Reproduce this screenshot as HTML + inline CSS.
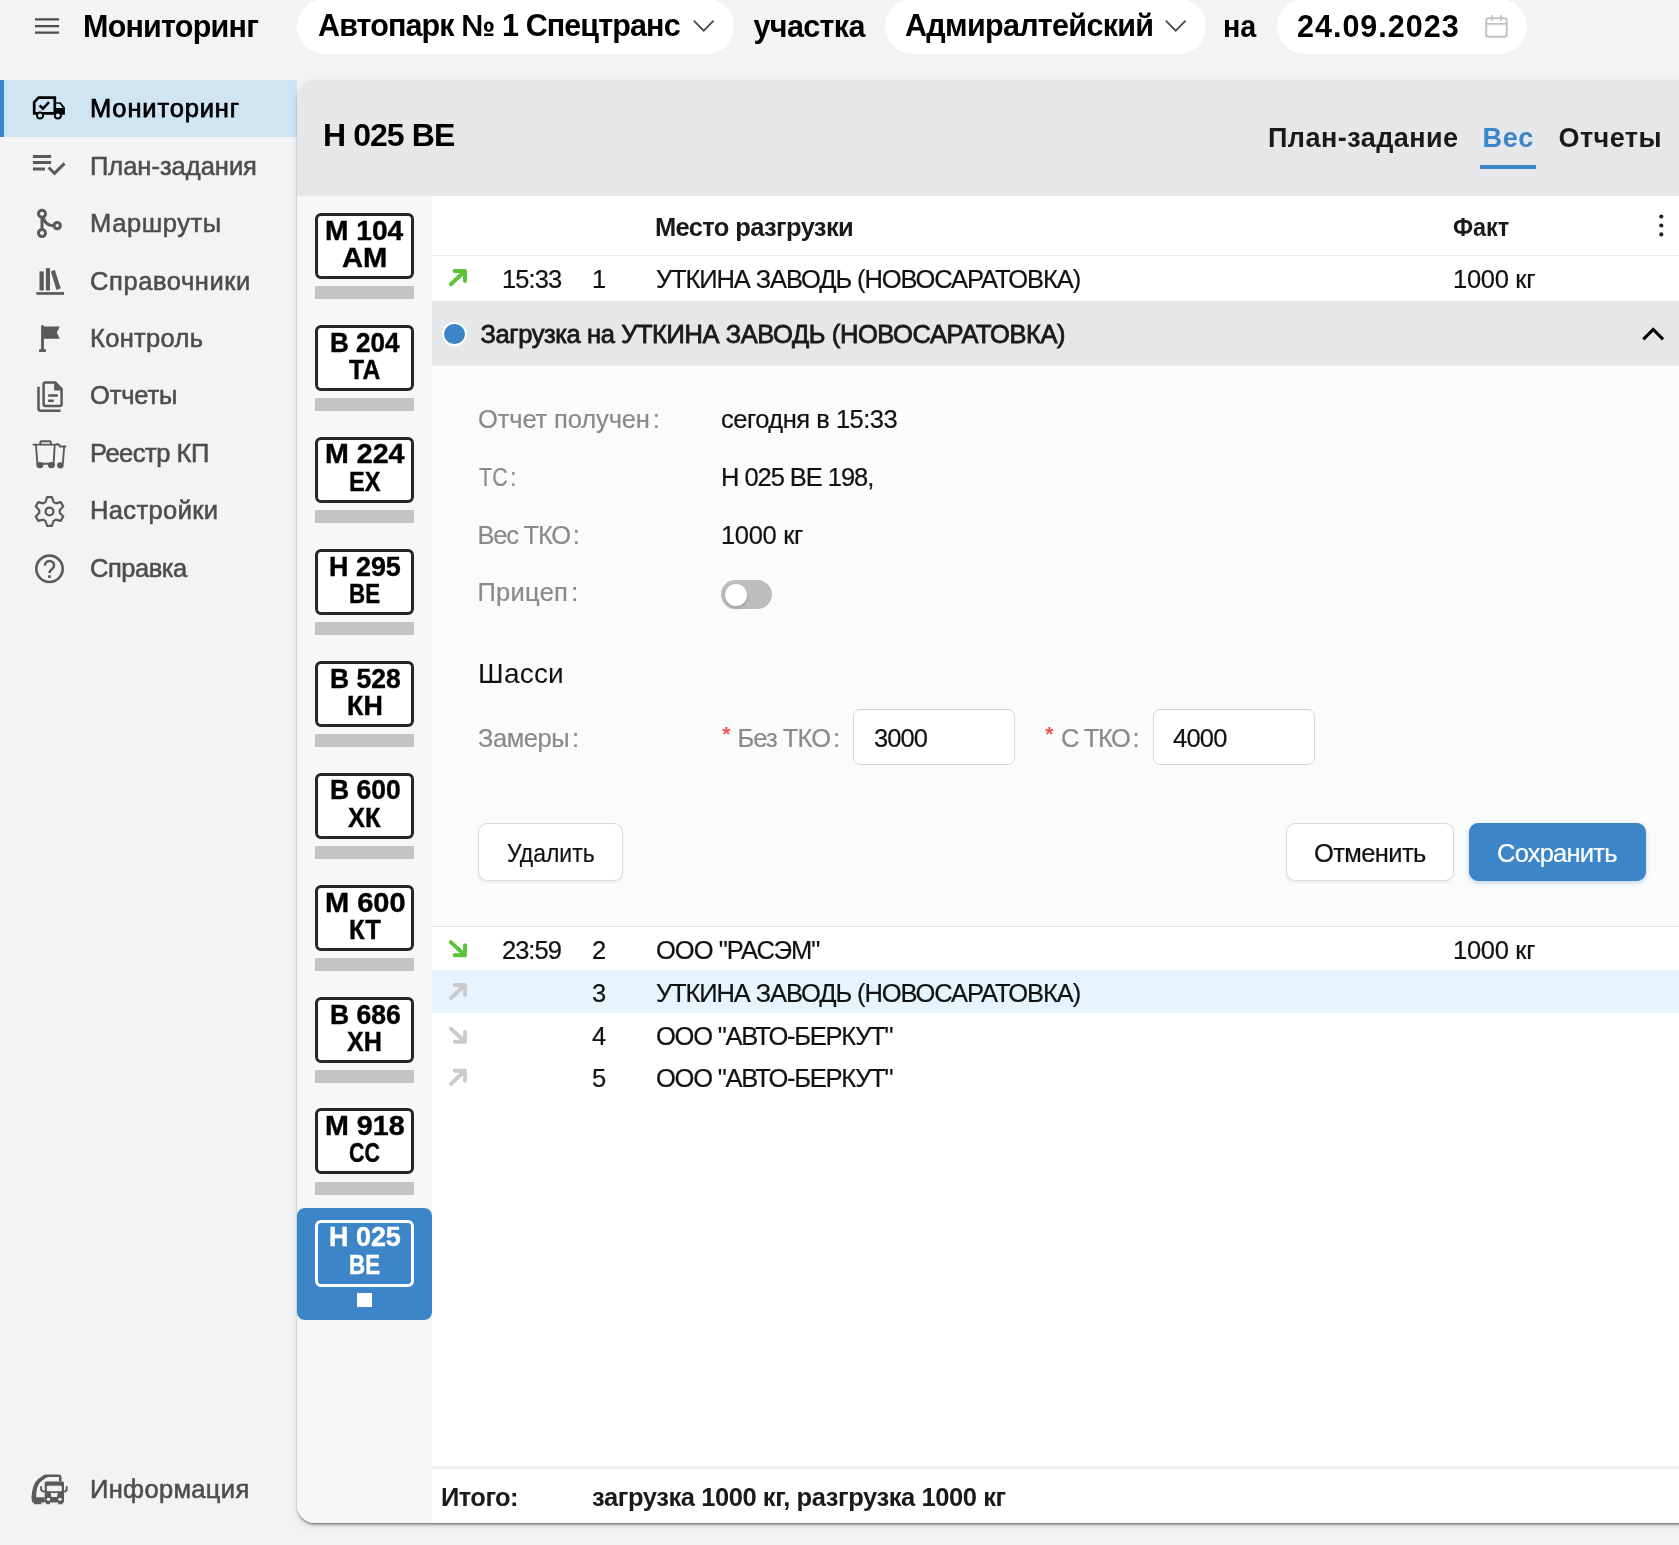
<!DOCTYPE html>
<html lang="ru">
<head>
<meta charset="utf-8">
<title>Мониторинг</title>
<style>
*{box-sizing:border-box;margin:0;padding:0}
html,body{width:1679px;height:1545px;overflow:hidden}
body{background:#f2f3f4;font-family:"Liberation Sans",sans-serif;color:#000;position:relative}
.a{position:absolute;white-space:nowrap;line-height:1}
svg{display:block;position:absolute;overflow:visible}
/* top bar */
.hd{font-weight:700;font-size:30.5px;color:#000}
.pill{position:absolute;top:-1.2px;height:55.2px;border-radius:27.6px;background:#fff}
/* sidebar */
.nav{font-size:25.5px;color:#4d4d4d;left:90px;-webkit-text-stroke:.55px #4d4d4d}
.nav.act{color:#000;-webkit-text-stroke:.75px #000}
.navsel{position:absolute;left:0;top:80px;width:297px;height:57px;background:#cfe5f3;border-left:4px solid #3d85c9}
/* panel */
.panel{position:absolute;left:297px;top:80px;width:1400px;height:1443px;background:#fff;border-radius:18px 0 0 18px;box-shadow:0 2.5px 3px -1.5px rgba(0,0,0,.62),0 3px 9px rgba(0,0,0,.10);overflow:hidden}
.phead{position:absolute;left:0;top:0;width:100%;height:116px;background:#e6e7e9}
.vcol{position:absolute;left:0;top:116px;width:135px;height:1330px;background:#f6f7f7}
.plate{position:absolute;left:315px;width:98.7px;height:66px;border:3px solid #262626;border-radius:6px;background:#fff}
.pt{font-weight:700;font-size:27px;color:#000;-webkit-text-stroke:.4px currentColor}
.pbar{position:absolute;left:315px;width:98.7px;height:13.4px;background:#c4c4c4}
.tab{font-size:27px;font-weight:700;color:#1a1a1a}
.th{font-size:25.5px;font-weight:700;color:#1a1a1a}
.td{font-size:25.5px;color:#111;-webkit-text-stroke:.2px currentColor}
.lbl{font-size:25.5px;color:#8a8a8a;-webkit-text-stroke:.2px #8a8a8a}
.col{margin-left:3px}
.inp{position:absolute;height:55.5px;width:162px;border:1px solid #d5d5d5;border-radius:7px;background:#fff}
.btn{position:absolute;top:823px;height:58px;border:1px solid #d9d9d9;border-radius:9px;background:#fff;box-shadow:0 2px 3px rgba(0,0,0,.06)}
</style>
</head>
<body>
<div id="root" style="position:absolute;left:0;top:0;width:1679px;height:1545px;will-change:transform">
<!-- TOP BAR -->
<svg style="left:35px;top:18px" width="24" height="17" viewBox="0 0 24 17"><path d="M0 1.4h24.1M0 8.1h24.1M0 14.6h24.1" stroke="#4d4d4d" stroke-width="2.3" fill="none"/></svg>
<div class="a hd" id="t_title" style="left:83px;top:11px;letter-spacing:-0.78px">Мониторинг</div>
<div class="pill" style="left:297px;width:437px"></div>
<div class="a hd" id="t_p1" style="left:318px;top:10px;letter-spacing:-0.89px">Автопарк № 1 Спецтранс</div>
<svg style="left:692.6px;top:20.2px" width="22" height="12" viewBox="0 0 22 12"><path d="M.8.7l9.9 10L20.6.7" stroke="#4a4a4a" stroke-width="1.7" fill="none"/></svg>
<div class="a hd" id="t_uch" style="left:753.5px;top:11px;letter-spacing:-0.64px">участка</div>
<div class="pill" style="left:885px;width:321px"></div>
<div class="a hd" id="t_p2" style="left:905px;top:10px;letter-spacing:-0.69px">Адмиралтейский</div>
<svg style="left:1165.2px;top:20.2px" width="22" height="12" viewBox="0 0 22 12"><path d="M.8.7l9.9 10L20.6.7" stroke="#4a4a4a" stroke-width="1.7" fill="none"/></svg>
<div class="a hd" id="t_na" style="left:1223.4px;top:11px;transform-origin:0 0;transform:scaleX(.94)">на</div>
<div class="pill" style="left:1277px;width:250px"></div>
<div class="a hd" id="t_p3" style="left:1297px;top:11px;letter-spacing:1px">24.09.2023</div>
<svg style="left:1480px;top:10px" width="34" height="34" viewBox="1480 10 34 34"><rect x="1486.2" y="18.2" width="20.5" height="18.5" rx="2.2" fill="none" stroke="#c2c2c2" stroke-width="2"/><path d="M1486 23.9h21M1492 15.2v5.5M1500.9 15.2v5.5" stroke="#c2c2c2" stroke-width="1.9" fill="none"/></svg>

<!-- SIDEBAR -->
<div class="navsel"></div>
<div class="a nav act" id="n1" style="top:96px;letter-spacing:0.84px">Мониторинг</div>
<div class="a nav" id="n2" style="top:153.5px;letter-spacing:-0.01px">План-задания</div>
<div class="a nav" id="n3" style="top:211px;letter-spacing:0.6px">Маршруты</div>
<div class="a nav" id="n4" style="top:268.5px;letter-spacing:0.58px">Справочники</div>
<div class="a nav" id="n5" style="top:326px;letter-spacing:0.31px">Контроль</div>
<div class="a nav" id="n6" style="top:383.4px;letter-spacing:-0.16px">Отчеты</div>
<div class="a nav" id="n7" style="top:440.9px;letter-spacing:-0.49px">Реестр КП</div>
<div class="a nav" id="n8" style="top:498.4px;letter-spacing:0.38px">Настройки</div>
<div class="a nav" id="n9" style="top:555.9px;letter-spacing:-0.48px">Справка</div>
<div class="a nav" id="n10" style="top:1477px;letter-spacing:0.34px">Информация</div>

<!-- ICONS -->
<svg style="left:0;top:0" width="297" height="1545" viewBox="0 0 297 1545">
<!-- monitoring truck -->
<g fill="none" stroke="#000">
<path d="M34.2 102.1L38.6 97.6H54.8V113.4H34.2Z" stroke-width="2.7" stroke-linejoin="miter"/>
<path d="M39.6 105.3L42.9 108.6L49 102.2" stroke-width="2.5"/>
</g>
<path d="M56.1 102.2H60.6L64.9 107.4V114.7H56.1ZM56.1 103.8V108H62.9L59.7 103.8Z" fill="#000" fill-rule="evenodd"/>
<circle cx="40" cy="115.5" r="3.05" fill="#cfe5f3" stroke="#000" stroke-width="1.9"/>
<circle cx="57.9" cy="115.5" r="3.05" fill="#cfe5f3" stroke="#000" stroke-width="1.9"/>
<!-- plan tasks -->
<path d="M32.9 156.4H51.1M32.9 162.6H51.1M32.9 169.1H45" stroke="#595a5c" stroke-width="3" fill="none"/>
<path d="M48.6 168.6L54.5 174.5L64.5 164.5" stroke="#595a5c" stroke-width="3" fill="none" transform="translate(0,-1.1)"/>
<!-- routes -->
<g fill="none" stroke="#595a5c" stroke-width="3">
<circle cx="42" cy="213.8" r="3.5"/><circle cx="42" cy="233.1" r="3.5"/><circle cx="57.2" cy="225.6" r="3.2"/>
<path d="M42 217.5V229.5M43.3 217.5Q45 225.3 53.6 225.8"/>
</g>
<!-- books -->
<g fill="#595a5c">
<rect x="39.5" y="271.4" width="4.3" height="19.1"/><rect x="45.9" y="268.2" width="4.1" height="22.3"/>
<path d="M50.9 271.4L54.8 269.8L60.7 288.2L56.5 290Z"/><rect x="36.3" y="292.1" width="27.7" height="2.7"/>
</g>
<!-- flag -->
<g fill="#595a5c">
<path d="M41.1 326.5a1.4 1.4 0 0 1 2.8 0H59.8L56.8 332.6L59.8 338.7H43.9V349.2H45.9V351.9H39.1V349.2H41.1Z"/>
</g>
<!-- reports -->
<g fill="none" stroke="#595a5c" stroke-width="2.5">
<path d="M45.5 382.4H55.2L61.6 389V404Q61.6 406 59.6 406H45.5Q43.6 406 43.6 404V384.3Q43.6 382.4 45.5 382.4Z"/>
<path d="M38.5 386.8V408.5Q38.5 410.7 40.7 410.7H60.6" />
<path d="M48.1 395.5H57.9M48.1 400.7H53.8" stroke-width="2.4"/>
</g>
<path d="M54.1 381.5V390.6H62.5Z" fill="#595a5c"/>
<!-- bins -->
<g fill="none" stroke="#595a5c" stroke-width="1.9" stroke-linecap="round" stroke-linejoin="round">
<path d="M33.4 444.6H57"/><path d="M40.3 444.6V442.2Q40.3 441.3 41.2 441.3H49.9Q50.8 441.3 50.8 442.2V444.6"/>
<path d="M36 445.5L37.4 464M54.7 445.5L53.6 464M41 463.8H50"/>
<path d="M57 444.2Q59.6 444.2 59.8 446.5H65.6M64.1 447L62.9 463"/>
</g>
<ellipse cx="39.9" cy="465.1" rx="3.5" ry="3.2" fill="#595a5c"/><ellipse cx="51.4" cy="465.1" rx="3.5" ry="3.2" fill="#595a5c"/><ellipse cx="60.4" cy="465.3" rx="3.3" ry="3.1" fill="#595a5c"/>
<!-- gear -->
<path d="M45.5 502.0L47.1 497.1L51.9 497.1L53.5 502.0A10.3 10.3 0 0 1 55.7 503.3L60.8 502.2L63.2 506.4L59.7 510.2A10.3 10.3 0 0 1 59.7 512.8L63.2 516.6L60.8 520.8L55.7 519.7A10.3 10.3 0 0 1 53.5 521.0L51.9 525.9L47.1 525.9L45.5 521.0A10.3 10.3 0 0 1 43.3 519.7L38.2 520.8L35.8 516.6L39.3 512.8A10.3 10.3 0 0 1 39.3 510.2L35.8 506.4L38.2 502.2L43.3 503.3A10.3 10.3 0 0 1 45.5 502.0Z" fill="none" stroke="#595a5c" stroke-width="2.2" stroke-linejoin="round"/>
<circle cx="49.5" cy="511.5" r="3.9" fill="none" stroke="#595a5c" stroke-width="2.3"/>
<!-- help -->
<circle cx="49.5" cy="568.8" r="13.2" fill="none" stroke="#595a5c" stroke-width="2.6"/>
<path d="M44.9 565.6A4.6 4.6 0 0 1 54.1 565.4C54.1 569 49.5 569.3 49.5 573" fill="none" stroke="#595a5c" stroke-width="2.5"/>
<rect x="48.1" y="575.3" width="2.8" height="2.6" fill="#595a5c"/>
<!-- info truck -->
<path d="M46.2 1481.5H62.5Q64 1481.5 64 1483V1502.6H62.5V1504.2H58.2V1502.6H50V1504.2H46.1V1502.6H44.7V1483Q44.7 1481.5 46.2 1481.5ZM48 1485.8Q46.8 1485.8 46.8 1487V1490Q46.8 1491.2 48 1491.2H60.6Q61.8 1491.2 61.8 1490V1487Q61.8 1485.8 60.6 1485.8ZM50.7 1493L51.6 1496.9H57L57.9 1493ZM46.6 1499.2a1.9 1.5 0 1 0 3.8 0a1.9 1.5 0 1 0 -3.8 0ZM58.1 1499.2a1.9 1.5 0 1 0 3.8 0a1.9 1.5 0 1 0 -3.8 0Z" fill="#595a5c" fill-rule="evenodd"/>
<path d="M41.1 1487V1489.5Q41.1 1491.3 44.7 1491.6M66.7 1487V1489.5Q66.7 1491.3 64 1491.6" fill="none" stroke="#595a5c" stroke-width="1.9" stroke-linecap="round"/>
<path d="M61.5 1481.5V1477.4Q61.5 1474.4 58.6 1474.4H46Q44.8 1474.4 43.8 1475L37.5 1479.6Q32.4 1484 31.4 1497.5L32.3 1502.6H33.9V1504.2H41.4V1502.6H44.7V1497.2H36.1Q36.3 1489 38.2 1485.4Q39.5 1482.6 42 1480.6L46.5 1477.6Q47.3 1476.9 48.5 1476.9H59V1481.5Z" fill="#595a5c"/>
</svg>
<!-- /ICONS -->

<!-- PANEL -->
<div class="panel">
  <div class="phead"></div>
  <div class="vcol"></div>
</div>
<div class="a" id="t_ptitle" style="left:323px;top:119px;font-size:32px;font-weight:700;letter-spacing:-0.93px">Н 025 ВЕ</div>
<div class="a tab" id="tab1" style="left:1268px;top:125px;letter-spacing:0.46px">План-задание</div>
<div class="a tab" id="tab2" style="left:1482.5px;top:125px;color:#3d85c9;letter-spacing:0.85px">Вес</div>
<div class="a" style="left:1480px;top:165px;width:56px;height:4px;background:#3d85c9"></div>
<div class="a tab" id="tab3" style="left:1558.5px;top:125px;letter-spacing:0.42px">Отчеты</div>

<!-- VEHICLES -->
<div class="plate" style="top:213px"></div><div class="pbar" style="top:286px"></div>
<div class="a pt" id="pl0a" style="left:324.50px;top:218.1px;transform-origin:0 0;transform:scaleX(1.0433)">М 104</div><div class="a pt" id="pl0b" style="left:342.00px;top:245.3px;transform-origin:0 0;transform:scaleX(1.0783)">АМ</div>
<div class="plate" style="top:325px"></div><div class="pbar" style="top:398px"></div>
<div class="a pt" id="pl1a" style="left:329.50px;top:330.2px;transform-origin:0 0;transform:scaleX(0.9662)">В 204</div><div class="a pt" id="pl1b" style="left:348.50px;top:357.4px;transform-origin:0 0;transform:scaleX(0.9147)">ТА</div>
<div class="plate" style="top:437px"></div><div class="pbar" style="top:510px"></div>
<div class="a pt" id="pl2a" style="left:325.00px;top:441.0px;transform-origin:0 0;transform:scaleX(1.0595)">М 224</div><div class="a pt" id="pl2b" style="left:349.00px;top:469.2px;transform-origin:0 0;transform:scaleX(0.8746)">ЕХ</div>
<div class="plate" style="top:549px"></div><div class="pbar" style="top:622px"></div>
<div class="a pt" id="pl3a" style="left:329.00px;top:554.1px;transform-origin:0 0;transform:scaleX(0.9972)">Н 295</div><div class="a pt" id="pl3b" style="left:349.00px;top:581.3px;transform-origin:0 0;transform:scaleX(0.8281)">ВЕ</div>
<div class="plate" style="top:661px"></div><div class="pbar" style="top:734px"></div>
<div class="a pt" id="pl4a" style="left:329.50px;top:666.1px;transform-origin:0 0;transform:scaleX(0.9802)">В 528</div><div class="a pt" id="pl4b" style="left:347.00px;top:693.3px;transform-origin:0 0;transform:scaleX(0.9944)">КН</div>
<div class="plate" style="top:773px"></div><div class="pbar" style="top:846px"></div>
<div class="a pt" id="pl5a" style="left:329.50px;top:776.9px;transform-origin:0 0;transform:scaleX(0.9800)">В 600</div><div class="a pt" id="pl5b" style="left:348.00px;top:805.1px;transform-origin:0 0;transform:scaleX(0.9429)">ХК</div>
<div class="plate" style="top:885px"></div><div class="pbar" style="top:958px"></div>
<div class="a pt" id="pl6a" style="left:325.00px;top:890.2px;transform-origin:0 0;transform:scaleX(1.0740)">М 600</div><div class="a pt" id="pl6b" style="left:349.00px;top:917.4px;transform-origin:0 0;transform:scaleX(0.9459)">КТ</div>
<div class="plate" style="top:997px"></div><div class="pbar" style="top:1070px"></div>
<div class="a pt" id="pl7a" style="left:329.50px;top:1002.1px;transform-origin:0 0;transform:scaleX(0.9802)">В 686</div><div class="a pt" id="pl7b" style="left:347.00px;top:1029.3px;transform-origin:0 0;transform:scaleX(0.9306)">ХН</div>
<div class="plate" style="top:1108.4px"></div><div class="pbar" style="top:1182px"></div>
<div class="a pt" id="pl8a" style="left:325.00px;top:1113.3px;transform-origin:0 0;transform:scaleX(1.0606)">М 918</div><div class="a pt" id="pl8b" style="left:349.00px;top:1139.5px;transform-origin:0 0;transform:scaleX(0.7949)">СС</div>
<div class="a" style="left:297px;top:1208px;width:135px;height:112px;background:#3d85c9;border-radius:8px"></div>
<div class="plate" style="top:1220.3px;height:67px;background:#3d85c9;border-color:#fff"></div>
<div class="a pt" id="pl9a" style="left:329.00px;top:1224.0px;transform-origin:0 0;transform:scaleX(0.9972);color:#fff">Н 025</div><div class="a pt" id="pl9b" style="left:349.00px;top:1252.1px;transform-origin:0 0;transform:scaleX(0.8281);color:#fff">ВЕ</div>
<div class="a" style="left:357px;top:1293.3px;width:15px;height:13.7px;background:#fff"></div>

<!-- TABLE -->
<div class="a th" id="th1" style="left:655px;top:215px;letter-spacing:-0.64px">Место разгрузки</div>
<div class="a th" id="th2" style="left:1453.40px;top:215px;transform-origin:0 0;transform:scaleX(0.9204)">Факт</div>
<div class="a" style="left:432px;top:255px;width:1247px;height:1px;background:#ececec"></div>

<svg style="left:1655px;top:210px" width="12" height="30" viewBox="1655 210 12 30"><circle cx="1661.3" cy="216.5" r="2.1" fill="#222"/><circle cx="1661.3" cy="225.5" r="2.1" fill="#222"/><circle cx="1661.3" cy="234.4" r="2.1" fill="#222"/></svg>
<!-- row 1 -->
<div class="a td" id="r1t" style="left:502px;top:267px;letter-spacing:-0.93px">15:33</div>
<div class="a td" id="r1n" style="left:592px;top:267px;letter-spacing:0px">1</div>
<div class="a td" id="r1p" style="left:656px;top:267px;letter-spacing:-1.1px">УТКИНА ЗАВОДЬ (НОВОСАРАТОВКА)</div>
<div class="a td" id="r1f" style="left:1453px;top:267px;letter-spacing:-0.3px">1000 кг</div>
<!-- expanded header -->
<div class="a" style="left:432px;top:301px;width:1247px;height:65px;background:#e6e7e9"></div>
<div class="a" style="left:442.3px;top:321.8px;width:24.6px;height:24.6px;border-radius:50%;background:#3d85c9;border:2.6px solid #fff"></div>
<div class="a td" id="exh" style="left:480.5px;top:322.3px;-webkit-text-stroke:.8px #1a1a1a;color:#1a1a1a;letter-spacing:-0.41px">Загрузка на УТКИНА ЗАВОДЬ (НОВОСАРАТОВКА)</div>
<svg style="left:1638px;top:322px" width="30" height="24" viewBox="1638 322 30 24"><path d="M1643.3 339.3L1653.2 329.4L1663.1 339.3" stroke="#000" stroke-width="3.1" fill="none"/></svg>
<!-- form -->
<div class="a" style="left:432px;top:366px;width:1247px;height:560px;background:#fafbfb"></div>
<div class="a lbl" id="l1" style="left:478px;top:407px;letter-spacing:-0.13px">Отчет получен<span class="col">:</span></div>
<div class="a td" id="v1" style="left:721px;top:407px;letter-spacing:-0.49px">сегодня в 15:33</div>
<div class="a lbl" id="l2" style="left:479.20px;top:465px;transform-origin:0 0;transform:scaleX(0.8431)">ТС<span class="col">:</span></div>
<div class="a td" id="v2" style="left:721px;top:465px;letter-spacing:-1.05px">Н 025 ВЕ 198,</div>
<div class="a lbl" id="l3" style="left:477.5px;top:523px;letter-spacing:-1.24px">Вес ТКО<span class="col">:</span></div>
<div class="a td" id="v3" style="left:721px;top:523px;letter-spacing:-0.31px">1000 кг</div>
<div class="a lbl" id="l4" style="left:477.5px;top:580px;letter-spacing:0.27px">Прицеп<span class="col">:</span></div>
<div class="a" style="left:720.8px;top:580.2px;width:51.3px;height:28.8px;border-radius:14.4px;background:#bebebe"></div>
<div class="a" style="left:724.6px;top:584px;width:22.4px;height:22.4px;border-radius:50%;background:#fff;box-shadow:0 2px 4px rgba(0,35,11,.2)"></div>
<div class="a" id="sh" style="left:478px;top:660px;font-size:28px;color:#111;letter-spacing:0.22px">Шасси</div>
<div class="a lbl" id="l5" style="left:478px;top:726px;letter-spacing:-0.45px">Замеры<span class="col">:</span></div>
<div class="a" id="as1" style="left:722.2px;top:723.4px;font-size:21px;font-weight:700;color:#f0524f">*</div>
<div class="a lbl" id="l6" style="left:737.5px;top:726px;letter-spacing:-0.94px">Без ТКО<span class="col">:</span></div>
<div class="inp" style="left:853px;top:709.3px"></div>
<div class="a td" id="i1" style="left:874px;top:726px;letter-spacing:-0.94px">3000</div>
<div class="a" id="as2" style="left:1045.2px;top:723.4px;font-size:21px;font-weight:700;color:#f0524f">*</div>
<div class="a lbl" id="l7" style="left:1061px;top:726px;letter-spacing:-1.38px">С ТКО<span class="col">:</span></div>
<div class="inp" style="left:1153px;top:709.3px"></div>
<div class="a td" id="i2" style="left:1173px;top:726px;letter-spacing:-0.8px">4000</div>
<div class="btn" style="left:478px;width:145px"></div>
<div class="a td" id="b1" style="left:506.60px;top:841px;transform-origin:0 0;transform:scaleX(0.9000)">Удалить</div>
<div class="btn" style="left:1286px;width:168px"></div>
<div class="a td" id="b2" style="left:1314px;top:841px;letter-spacing:-0.61px">Отменить</div>
<div class="btn" style="left:1469px;width:177px;background:#3d85c9;border-color:#3d85c9;box-shadow:0 2px 4px rgba(61,133,201,.3)"></div>
<div class="a td" id="b3" style="left:1497px;top:841px;color:#fff;letter-spacing:-0.78px">Сохранить</div>
<div class="a" style="left:432px;top:926px;width:1247px;height:1px;background:#e4e4e4"></div>
<!-- row 2 -->
<div class="a td" id="r2t" style="left:502px;top:938px;letter-spacing:-1px">23:59</div>
<div class="a td" id="r2n" style="left:592px;top:938px;letter-spacing:0px">2</div>
<div class="a td" id="r2p" style="left:656px;top:938px;letter-spacing:-0.98px">ООО "РАСЭМ"</div>
<div class="a td" id="r2f" style="left:1453px;top:938px;letter-spacing:-0.3px">1000 кг</div>
<!-- row 3 -->
<div class="a" style="left:432px;top:970px;width:1247px;height:43px;background:#e8f4fd"></div>
<div class="a td" id="r3n" style="left:592px;top:981px;letter-spacing:0px">3</div>
<div class="a td" id="r3p" style="left:656px;top:981px;letter-spacing:-1.1px">УТКИНА ЗАВОДЬ (НОВОСАРАТОВКА)</div>
<!-- row 4 -->
<div class="a td" id="r4n" style="left:592px;top:1024px;letter-spacing:0px">4</div>
<div class="a td" id="r4p" style="left:656px;top:1024px;letter-spacing:-1.24px">ООО "АВТО-БЕРКУТ"</div>
<!-- row 5 -->
<div class="a td" id="r5n" style="left:592px;top:1066px;letter-spacing:0px">5</div>
<div class="a td" id="r5p" style="left:656px;top:1066px;letter-spacing:-1.24px">ООО "АВТО-БЕРКУТ"</div>
<!-- arrows -->
<svg style="left:432px;top:256px" width="60" height="850" viewBox="432 256 60 850"><g fill="none" stroke-width="3.9" stroke-linecap="round" stroke-linejoin="round"><path d="M454.6 271H465V281M465 271L450.8 284.2" stroke="#5bc23a"/><path d="M454.6 955.3H465V945.3M465 955.3L450.8 942.0999999999999" stroke="#5bc23a"/><path d="M454.6 985H465V995M465 985L450.8 998.2" stroke="#cbcbcb"/><path d="M454.6 1041.8H465V1031.8M465 1041.8L450.8 1028.6" stroke="#cbcbcb"/><path d="M454.6 1070.8H465V1080.8M465 1070.8L450.8 1084.0" stroke="#cbcbcb"/></g></svg>
<!-- footer -->
<div class="a" style="left:432px;top:1466px;width:1247px;height:3px;background:#f1f1f1"></div>
<div class="a th" id="f1" style="left:441px;top:1485px;letter-spacing:-0.56px">Итого:</div>
<div class="a th" id="f2" style="left:592px;top:1485px;letter-spacing:-0.42px">загрузка 1000 кг, разгрузка 1000 кг</div>

</div>
</body>
</html>
